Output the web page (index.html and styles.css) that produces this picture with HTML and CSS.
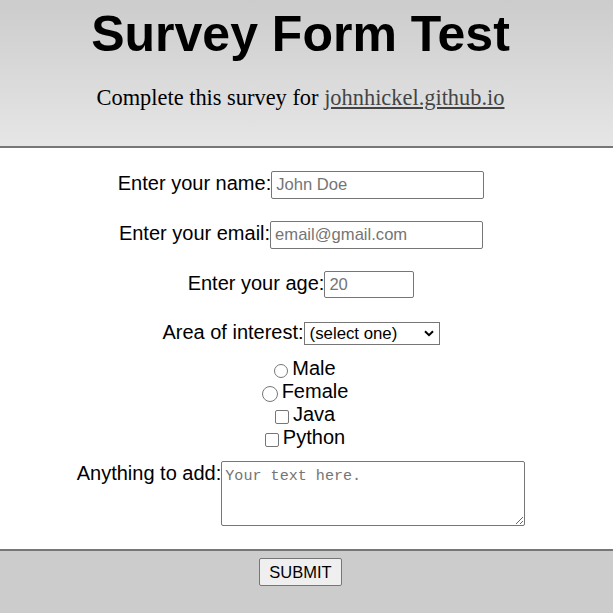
FILE: index.html
```html
<!DOCTYPE html>
<html lang="en">
<head>
<meta charset="utf-8">
<title>Survey Form Test</title>
<link rel="stylesheet" href="styles.css">
</head>
<body>
<header class="masthead">
  <h1 class="title">Survey Form Test</h1>
  <p class="subtitle">Complete this survey for <a class="site-link" href="#">johnhickel.github.io</a></p>
</header>
<form class="survey">
  <div class="row">
    <label class="label" for="name">Enter your name:</label><input class="field field-wide" id="name" type="text" placeholder="John Doe">
  </div>
  <div class="row">
    <label class="label" for="email">Enter your email:</label><input class="field field-wide" id="email" type="email" placeholder="email@gmail.com">
  </div>
  <div class="row row-age">
    <label class="label" for="age">Enter your age:</label><input class="field field-age" id="age" type="text" placeholder="20">
  </div>
  <div class="row row-select">
    <label class="label" for="interest">Area of interest:</label><select class="picker" id="interest">
      <option>(select one)</option>
      <option>Front end</option>
      <option>Back end</option>
    </select>
  </div>
  <div class="choices">
    <label class="choice"><input class="radio" type="radio" name="gender">Male</label>
    <label class="choice"><input class="radio radio-big" type="radio" name="gender">Female</label>
    <label class="choice"><input class="check" type="checkbox">Java</label>
    <label class="choice"><input class="check" type="checkbox">Python</label>
  </div>
  <div class="row row-top">
    <label class="label" for="extra">Anything to add:</label><textarea class="notes" id="extra" placeholder="Your text here."></textarea>
  </div>
  <footer class="actions">
    <button class="submit" type="submit">SUBMIT</button>
  </footer>
</form>
</body>
</html>
```

FILE: styles.css
```css
html, body {
  margin: 0;
  padding: 0;
}

body {
  min-height: 100vh;
  display: flex;
  flex-direction: column;
  font-family: "Liberation Sans", Arial, sans-serif;
  color: #000;
  background: #fff;
}

.masthead {
  height: 146px;
  box-sizing: content-box;
  padding-right: 12px;
  background: linear-gradient(to bottom, #cccccc, #e6e6e6);
  border-bottom: 2px solid #777777;
  text-align: center;
}

.title {
  margin: 0;
  padding-top: 5px;
  font-family: "Liberation Sans", Arial, sans-serif;
  font-weight: bold;
  font-size: 50px;
}

.subtitle {
  margin: 22px 0 0;
  font-family: "Liberation Serif", "Times New Roman", serif;
  font-size: 22.4px;
}

.site-link {
  color: #444444;
  text-decoration: underline;
}

.survey {
  flex: 1;
  display: flex;
  flex-direction: column;
  padding-top: 23px;
}

.row {
  display: flex;
  justify-content: center;
  align-items: baseline;
  padding-right: 11px;
  margin-bottom: 22px;
}

.row-age {
  margin-bottom: 23px;
}

.label {
  font-size: 20px;
}

.field {
  box-sizing: border-box;
  height: 28px;
  padding: 1px 4px;
  border: 1px solid #767676;
  border-radius: 2px;
  font-family: "Liberation Sans", Arial, sans-serif;
  font-size: 16.6px;
  color: #000;
  background: #fff;
}

.field::placeholder {
  color: #757575;
}

.field-wide {
  width: 213px;
}

.field-age {
  width: 90px;
  height: 27px;
}

.picker {
  box-sizing: border-box;
  width: 136px;
  height: 23px;
  padding: 0 20px 0 5px;
  font-family: "Liberation Sans", Arial, sans-serif;
  font-size: 16.8px;
  color: #000;
  border: 1px solid #767676;
  border-radius: 0;
  -webkit-appearance: none;
  appearance: none;
  background-color: #fff;
  background-image: url("data:image/svg+xml;utf8,<svg xmlns='http://www.w3.org/2000/svg' width='10' height='7' viewBox='0 0 10 7'><path d='M1 1.2 L5 5.2 L9 1.2' fill='none' stroke='black' stroke-width='2'/></svg>");
  background-repeat: no-repeat;
  background-position: right 5px center;
  background-size: 10px 7px;
}

.row-select {
  margin-bottom: 12px;
}

.choices {
  display: flex;
  flex-direction: column;
  align-items: center;
  padding-right: 8px;
}

.choice {
  font-size: 20px;
  line-height: 23px;
}

.radio,
.check {
  -webkit-appearance: none;
  appearance: none;
  box-sizing: border-box;
  width: 14px;
  height: 14px;
  margin: 0 4px 0 5px;
  border: 1px solid #767676;
  background: #fff;
  vertical-align: middle;
  position: relative;
  top: 1px;
}

.radio {
  border-radius: 50%;
}

.check {
  border-radius: 2px;
}

.radio-big {
  width: 16px;
  height: 16px;
}

.row-top {
  align-items: flex-start;
  margin-top: 12px;
  margin-bottom: 23px;
}

.row-top .label {
  padding-top: 1px;
}

.notes {
  box-sizing: border-box;
  width: 304px;
  height: 65px;
  padding: 5px 3px 2px;
  border: 1px solid #767676;
  border-radius: 2px;
  font-family: "Liberation Mono", "DejaVu Sans Mono", monospace;
  font-size: 15.1px;
}

.notes::placeholder {
  color: #757575;
}

.actions {
  flex: 1;
  border-top: 2px solid #777777;
  background: #cccccc;
  display: flex;
  justify-content: center;
  align-items: flex-start;
  padding-top: 7px;
  padding-right: 12px;
}

.submit {
  box-sizing: border-box;
  width: 83px;
  height: 28px;
  font-family: "Liberation Sans", Arial, sans-serif;
  font-size: 16.5px;
  color: #000;
  background: #efefef;
  border: 1px solid #767676;
  border-radius: 2px;
  padding: 1px 4px;
}
```
